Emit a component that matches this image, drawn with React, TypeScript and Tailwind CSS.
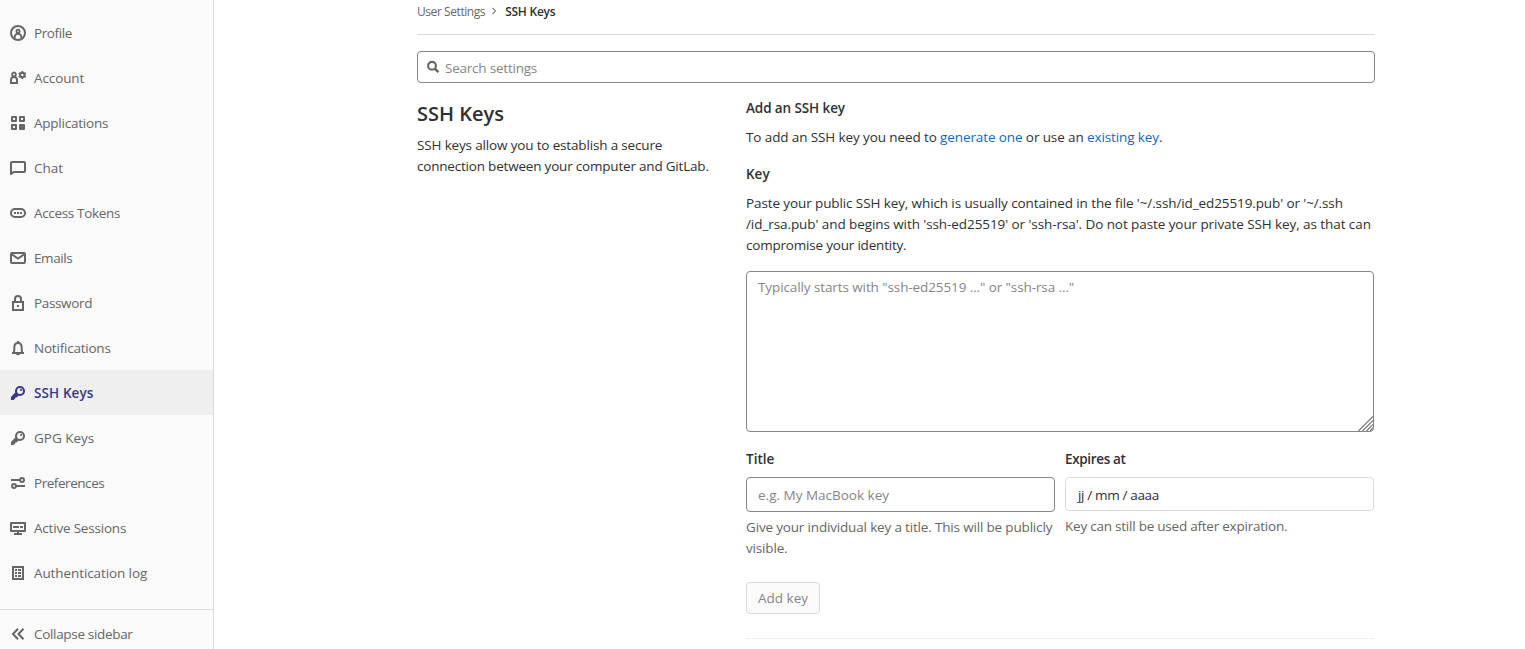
import { ReactNode } from "react";

const icons: Record<string, ReactNode> = {
  profile: (
    <g fill="none" stroke="currentColor" strokeWidth="2">
      <circle cx="8" cy="8" r="7" />
      <circle cx="8" cy="6.3" r="1.6" strokeWidth="1.8" />
      <path d="M4.7 13.200V11.800a3.300 3 0 0 1 6.600 0V13.200" strokeWidth="1.900" />
    </g>
  ),
  account: (
    <g fill="none" stroke="currentColor">
      <circle cx="4" cy="4.400" r="1.900" strokeWidth="1.800" />
      <path d="M1 13V10a3 3 0 0 1 6 0v3z" strokeWidth="2" />
      <circle cx="12.300" cy="5" r="2.200" strokeWidth="2" />
      <path d="M12.300 1v2M12.300 7v2M8.700 3l2 1M14 6l2 1M8.700 7l2-1M14 4l2-1" strokeWidth="1.800" />
    </g>
  ),
  applications: (
    <g>
      <path
        d="M2 1h4a1 1 0 0 1 1 1v4a1 1 0 0 1-1 1H2a1 1 0 0 1-1-1V2a1 1 0 0 1 1-1zm1 2v2h2V3zM10 1h4a1 1 0 0 1 1 1v4a1 1 0 0 1-1 1h-4a1 1 0 0 1-1-1V2a1 1 0 0 1 1-1zm1 2v2h2V3zM2 9h4a1 1 0 0 1 1 1v4a1 1 0 0 1-1 1H2a1 1 0 0 1-1-1v-4a1 1 0 0 1 1-1zm1 2v2h2v-2z"
        fill="currentColor"
        fillRule="evenodd"
      />
      <rect x="9" y="9" width="6" height="6" rx="1" fill="currentColor" />
    </g>
  ),
  chat: (
    <path
      d="M2 1h12a2 2 0 0 1 2 2v8a2 2 0 0 1-2 2H4.200L1.600 14.800A1 1 0 0 1 0 14V3a2 2 0 0 1 2-2zm0 2v9l1.500-1H14V3z"
      fill="currentColor"
      fillRule="evenodd"
    />
  ),
  token: (
    <g>
      <rect x="1" y="4" width="14" height="8" rx="4" fill="none" stroke="currentColor" strokeWidth="2" />
      <path d="M4 7h2v2H4zM7 7h2v2H7zM10 7h2v2h-2z" fill="currentColor" />
    </g>
  ),
  mail: (
    <g fill="none" stroke="currentColor" strokeWidth="2">
      <rect x="1" y="3" width="14" height="10" rx="1" />
      <path d="M2 4.500l6 4 6-4" strokeWidth="2" />
    </g>
  ),
  lock: (
    <g>
      <path d="M3 7h10v8H3zM5 7V4a3 3 0 0 1 6 0v3" fill="none" stroke="currentColor" strokeWidth="2" />
      <rect x="7" y="10" width="2" height="2" fill="currentColor" />
    </g>
  ),
  bell: (
    <g>
      <path
        d="M2 13h12M3.700 13c.8-1.600.5-3.400.6-5.600C4.400 4.600 5.800 3 8 3s3.600 1.600 3.700 4.400c.1 2.200-.2 4 .6 5.600"
        fill="none"
        stroke="currentColor"
        strokeWidth="2"
      />
      <path d="M7 1h2v2H7zM6 14h4a2 1.300 0 0 1-4 0z" fill="currentColor" />
    </g>
  ),
  key: (
    <g>
      <circle cx="10" cy="6" r="4" fill="none" stroke="currentColor" strokeWidth="2.100" />
      <circle cx="11" cy="5" r="1.100" fill="currentColor" />
      <path d="M5.400 7.200l3.400 3.400-2.300 1.900H5.200V14H4v1H1v-3z" fill="currentColor" />
    </g>
  ),
  prefs: (
    <g fill="none" stroke="currentColor" strokeWidth="2">
      <circle cx="12" cy="5" r="2" />
      <circle cx="4" cy="11" r="2" />
      <path d="M1 5h9M6 11h9" />
    </g>
  ),
  monitor: (
    <g>
      <path d="M1 3h14v8H1zM8 11v3M4 14h8" fill="none" stroke="currentColor" strokeWidth="2" strokeLinejoin="round" />
      <path d="M3 6h6v2H3zM10 6h3v2h-3z" fill="currentColor" />
    </g>
  ),
  log: (
    <g>
      <path d="M3 2h10v12H3z" fill="none" stroke="currentColor" strokeWidth="2" />
      <path d="M5 4h2v2H5zM8 4h3v2H8zM5 7h2v2H5zM8 7h3v2H8zM5 10h2v2H5zM8 10h3v2H8z" fill="currentColor" />
    </g>
  ),
  collapse: <path d="M8 2.800L3 8l5 5.200M13.500 2.800L8.500 8l5 5.200" fill="none" stroke="currentColor" strokeWidth="2" />,
  search: (
    <g fill="none" stroke="currentColor">
      <circle cx="7" cy="6.800" r="3.900" strokeWidth="2.100" />
      <path d="M9.800 9.600l3.600 3.600" strokeWidth="2.400" />
    </g>
  ),
};

function Icon({ name, className = "" }: { name: string; className?: string }) {
  return (
    <svg viewBox="0 0 16 16" className={`h-4 w-4 shrink-0 ${className}`}>
      {icons[name]}
    </svg>
  );
}

const items = [
  ["profile", "Profile", "tracking-[-0.4px]"],
  ["account", "Account", "tracking-[-0.1px]"],
  ["applications", "Applications", "tracking-[-0.23px]"],
  ["chat", "Chat", ""],
  ["token", "Access Tokens", "tracking-[-0.33px]"],
  ["mail", "Emails", "tracking-[-0.4px]"],
  ["lock", "Password", "tracking-[-0.35px]"],
  ["bell", "Notifications", "tracking-[-0.22px]"],
  ["key", "SSH Keys", "tracking-[0.1px]"],
  ["key", "GPG Keys", ""],
  ["prefs", "Preferences", "tracking-[-0.45px]"],
  ["monitor", "Active Sessions", "tracking-[-0.2px]"],
  ["log", "Authentication log", "tracking-[-0.1px]"],
];

export default function App() {
  return (
    <div className="flex h-[649px] w-full overflow-hidden bg-white font-['Open_Sans',sans-serif] text-[13.5px] leading-[21px] text-[#303030]">
      <aside className="flex w-[214px] shrink-0 flex-col border-r border-[#dbdbdb] bg-[#fafafa] pt-2.5 text-[#666]">
        <nav>
          {items.map(([icon, label, tracking]) => (
            <a
              key={label}
              className={`flex h-[45px] items-center gap-2 pt-px pl-2.5 ${label === "SSH Keys" ? "bg-[#efefef] font-semibold text-[#393982]" : ""}`}
            >
              <Icon name={icon} />
              <span className={tracking}>{label}</span>
            </a>
          ))}
        </nav>
        <button className="mt-3.5 flex h-[49px] shrink-0 items-center gap-2 border-t border-[#dbdbdb] pl-2.5 tracking-[-0.32px]">
          <Icon name="collapse" />
          <span>Collapse sidebar</span>
        </button>
      </aside>

      <main className="ml-[203px] w-[958px] shrink-0">
        <div className="flex h-[35px] items-start border-b border-[#dbdbdb] pt-0.5 text-[12px] leading-5">
          <span className="tracking-[-0.43px] text-[#666]">User Settings</span>
          <svg viewBox="0 0 8 8" className="mr-[7px] ml-[5px] mt-[5px] h-2 w-2">
            <path d="M2.500 1l3 3-3 3" fill="none" stroke="#868686" strokeWidth="1.200" />
          </svg>
          <span className="tracking-[-0.25px] font-semibold">SSH Keys</span>
        </div>
        <div className="mt-4 flex h-8 items-center gap-1 rounded border border-[#868686] pl-[7px] text-[#868686]">
          <Icon name="search" className="text-[#666]" />
          <span className="pt-0.5 tracking-[-0.22px]">Search settings</span>
        </div>
        <div className="flex">
          <section className="w-[329px] shrink-0 pt-[18px]">
            <h4 className="text-[20px] leading-[26px] font-semibold">SSH Keys</h4>
            <p className="mt-2">
              <span className="tracking-[-0.16px]">SSH keys allow you to establish a secure</span>
              <br />
              <span className="tracking-[-0.2px]">connection between your computer and GitLab.</span>
            </p>
          </section>
          <section className="w-[628px] shrink-0 pt-[15px] whitespace-nowrap">
            <h5 className="tracking-[-0.1px] font-semibold">Add an SSH key</h5>
            <p className="mt-2 tracking-[-0.11px]">
              To add an SSH key you need to <a className="text-[#1068bf]">generate one</a> or use an{" "}
              <a className="text-[#1068bf]">existing key</a>.
            </p>
            <label className="mt-4 block font-semibold">Key</label>
            <p className="mt-2">
              <span className="tracking-[-0.105px]">
                Paste your public SSH key, which is usually contained in the file '~/.ssh/id_ed25519.pub' or '~/.ssh
              </span>
              <br />
              <span className="tracking-[-0.08px]">
                /id_rsa.pub' and begins with 'ssh-ed25519' or 'ssh-rsa'. Do not paste your private SSH key, as that can
              </span>
              <br />
              <span className="tracking-[-0.2px]">compromise your identity.</span>
            </p>
            <div className="relative mt-[15px] h-[161px] rounded border border-[#868686] px-[11px] py-[5px] tracking-[-0.1px] text-[#868686]">
              Typically starts with "ssh-ed25519 ..." or "ssh-rsa ..."
              <svg viewBox="0 0 15 15" className="absolute right-0 bottom-0 h-[15px] w-[15px]">
                <path d="M0.500 15L15 0.500M4.500 15L15 4.500M8.500 15L15 8.500M12 15l3-3" stroke="#777" strokeWidth="1.200" />
              </svg>
            </div>
            <div className="mt-[17px] flex gap-2.5">
              <div className="w-[309px]">
                <label className="block font-semibold">Title</label>
                <div className="mt-[7px] h-[35px] rounded border border-[#868686] px-[11px] leading-[35px] text-[#868686]">
                  e.g. My MacBook key
                </div>
                <p className="mt-[5px] tracking-[-0.17px] text-[#666]">
                  Give your individual key a title. This will be publicly
                  <br />
                  visible.
                </p>
              </div>
              <div className="w-[309px]">
                <label className="block tracking-[-0.35px] font-semibold">Expires at</label>
                <div className="mt-[7px] h-[34px] rounded border border-[#dbdbdb] px-3 leading-[35px] tracking-[-0.35px]">
                  jj / mm / aaaa
                </div>
                <p className="mt-[5px] tracking-[-0.23px] text-[#666]">Key can still be used after expiration.</p>
              </div>
            </div>
            <button className="mt-[23px] block h-8 w-[74px] rounded border border-[#dbdbdb] bg-[#fafafa] text-[#868686]">
              Add key
            </button>
            <hr className="mt-6 border-[#efefef]" />
          </section>
        </div>
      </main>
    </div>
  );
}
